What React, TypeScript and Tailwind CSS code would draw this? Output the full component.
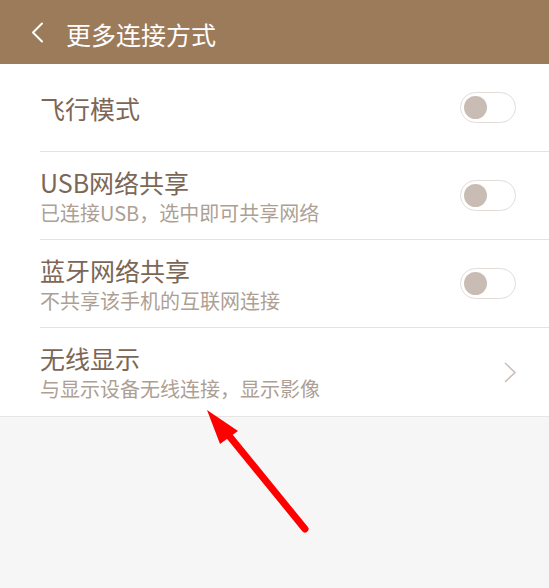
import React from "react";

const font = { fontFamily: '"Noto Sans CJK SC", "Noto Sans", sans-serif' };

type Item = {
  title: string;
  sub?: string;
  kind: "toggle" | "link";
};

const items: Item[] = [
  { title: "飞行模式", kind: "toggle" },
  { title: "USB网络共享", sub: "已连接USB，选中即可共享网络", kind: "toggle" },
  { title: "蓝牙网络共享", sub: "不共享该手机的互联网连接", kind: "toggle" },
  { title: "无线显示", sub: "与显示设备无线连接，显示影像", kind: "link" },
];

function Toggle() {
  return (
    <div className="flex h-[31px] w-[56px] items-center rounded-full border border-[#e4ddd7] bg-white pl-[3px]">
      <div className="h-[23px] w-[23px] rounded-full bg-[#c8bcb4]" />
    </div>
  );
}

function Chevron() {
  return (
    <svg width="12" height="21" viewBox="0 0 12 21" fill="none">
      <path d="M1 1l10 9.5L1 20" stroke="#c9bdb5" strokeWidth="1.5" strokeLinejoin="round" />
    </svg>
  );
}

export default function App() {
  return (
    <div className="relative h-[588px] w-[549px] overflow-hidden bg-[#f6f6f6]" style={font}>
      {/* Header */}
      <div className="flex h-[64px] items-center bg-[#9c7b5a] pl-[31px] text-white">
        <svg width="13" height="21" viewBox="0 0 13 21" fill="none">
          <path d="M11 1.5L2 10.5l9 9" stroke="#fff" strokeWidth="2" strokeLinecap="round" strokeLinejoin="round" />
        </svg>
        <span className="ml-[22px] mt-[4px] text-[25px] leading-[30px]">更多连接方式</span>
      </div>

      {/* List */}
      <div className="border-b border-[#e6e6e6] bg-white">
        {items.map((item, i) => (
          <div key={item.title} className="pl-[40px]">
            <div
              className={`flex h-[88px] items-center pr-[33px] ${
                i < items.length - 1 ? "border-b border-[#e3e3e3]" : ""
              }`}
            >
              <div className="flex-1">
                <div className="text-[25px] leading-[30px] text-[#7c6756]">{item.title}</div>
                {item.sub && (
                  <div className="mt-[4px] text-[20px] leading-[24px] text-[#ad9f94]">{item.sub}</div>
                )}
              </div>
              {item.kind === "toggle" ? <Toggle /> : <Chevron />}
            </div>
          </div>
        ))}
      </div>

      {/* Annotation arrow */}
      <svg className="absolute left-0 top-0" width="549" height="588" viewBox="0 0 549 588">
        <line x1="305" y1="529" x2="226" y2="432" stroke="#ff0000" strokeWidth="7" strokeLinecap="round" />
        <polygon points="207,410 238,431 220,444" fill="#ff0000" />
      </svg>
    </div>
  );
}
